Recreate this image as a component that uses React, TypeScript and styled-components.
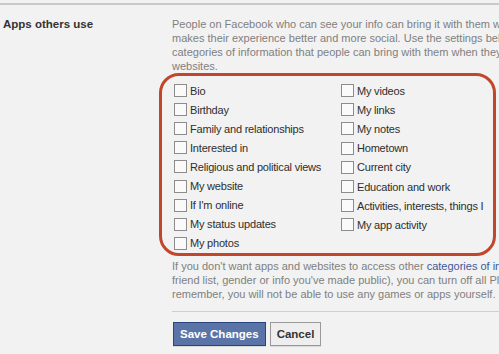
import React from "react";
import styled, { createGlobalStyle } from "styled-components";

const Global = createGlobalStyle`
  html, body { margin: 0; padding: 0; background: #f2f2f2; overflow: hidden; }
  body { font-family: "Liberation Sans", Tahoma, Arial, sans-serif; font-size: 11px; color: #333; }
`;

const Page = styled.div`
  width: 499px;
  height: 354px;
  overflow: hidden;
  padding-top: 3px;
  box-sizing: border-box;
`;

const TopRule = styled.div`
  height: 2px;
  background: #c9c9c9;
`;

const Section = styled.div`
  display: grid;
  grid-template-columns: 172px 700px;
  padding-top: 12px;
`;

const Heading = styled.div`
  padding-left: 3px;
  font-weight: bold;
  font-size: 11.5px;
  color: #333;
  line-height: 14px;
  white-space: nowrap;
`;

const Body = styled.div`
  display: flex;
  flex-direction: column;
`;

const Note = styled.div<{ $top?: number }>`
  color: #808080;
  line-height: 14px;
  white-space: nowrap;
  margin-top: ${(p) => p.$top ?? 0}px;
`;

const Link = styled.span`
  color: #3b5998;
`;

const Highlight = styled.div`
  margin-left: -13px;
  margin-top: 0px;
  width: 337px;
  height: 183px;
  box-sizing: border-box;
  border: 3px solid #c2462c;
  border-radius: 20px;
  padding: 5px 9px 0 12px;
  display: grid;
  grid-template-columns: 167px 1fr;
  overflow: hidden;
`;

const Column = styled.div`
  display: flex;
  flex-direction: column;
  overflow: hidden;
`;

const Row = styled.label`
  display: flex;
  align-items: center;
  height: 19.2px;
  gap: 3px;
  white-space: nowrap;
  color: #2e2e2e;
  letter-spacing: -0.2px;
`;

const Box = styled.span`
  width: 11px;
  height: 11px;
  border: 1px solid #8c8c8c;
  background: #fafafa;
  flex: none;
`;

const Rule = styled.div`
  height: 1px;
  background: #cfcfcf;
  margin-top: 10px;
`;

const Buttons = styled.div`
  display: flex;
  gap: 4px;
  margin-top: 10px;
  padding-left: 1px;
`;

const Button = styled.button<{ $primary?: boolean }>`
  font-family: "Liberation Sans", Tahoma, Arial, sans-serif;
  font-size: 11.5px;
  font-weight: bold;
  height: 24px;
  padding: 0 6px;
  border: 1px solid ${(p) => (p.$primary ? "#29447e" : "#999")};
  background: ${(p) => (p.$primary ? "#5b74a8" : "#eeeeee")};
  color: ${(p) => (p.$primary ? "#fff" : "#333")};
  box-shadow: 0 1px 0 rgba(0, 0, 0, 0.1);
  cursor: pointer;
`;

const left = [
  "Bio",
  "Birthday",
  "Family and relationships",
  "Interested in",
  "Religious and political views",
  "My website",
  "If I'm online",
  "My status updates",
  "My photos",
];
const right = [
  "My videos",
  "My links",
  "My notes",
  "Hometown",
  "Current city",
  "Education and work",
  "Activities, interests, things I like",
  "My app activity",
];

export default function App() {
  return (
    <Page>
      <Global />
      <TopRule />
      <Section>
        <Heading>Apps others use</Heading>
        <Body>
          <Note>People on Facebook who can see your info can bring it with them when they use apps. This</Note>
          <Note>makes their experience better and more social. Use the settings below to control the</Note>
          <Note>categories of information that people can bring with them when they use apps, games and</Note>
          <Note>websites.</Note>
          <Highlight>
            <Column>
              {left.map((t) => (
                <Row key={t}>
                  <Box />
                  {t}
                </Row>
              ))}
            </Column>
            <Column>
              {right.map((t) => (
                <Row key={t}>
                  <Box />
                  {t}
                </Row>
              ))}
            </Column>
          </Highlight>
          <Note $top={3}>
            If you don't want apps and websites to access other <Link>categories of info</Link> (like your
          </Note>
          <Note>friend list, gender or info you've made public), you can turn off all Platform apps. But</Note>
          <Note>remember, you will not be able to use any games or apps yourself.</Note>
          <Rule />
          <Buttons>
            <Button $primary>Save Changes</Button>
            <Button>Cancel</Button>
          </Buttons>
        </Body>
      </Section>
    </Page>
  );
}
